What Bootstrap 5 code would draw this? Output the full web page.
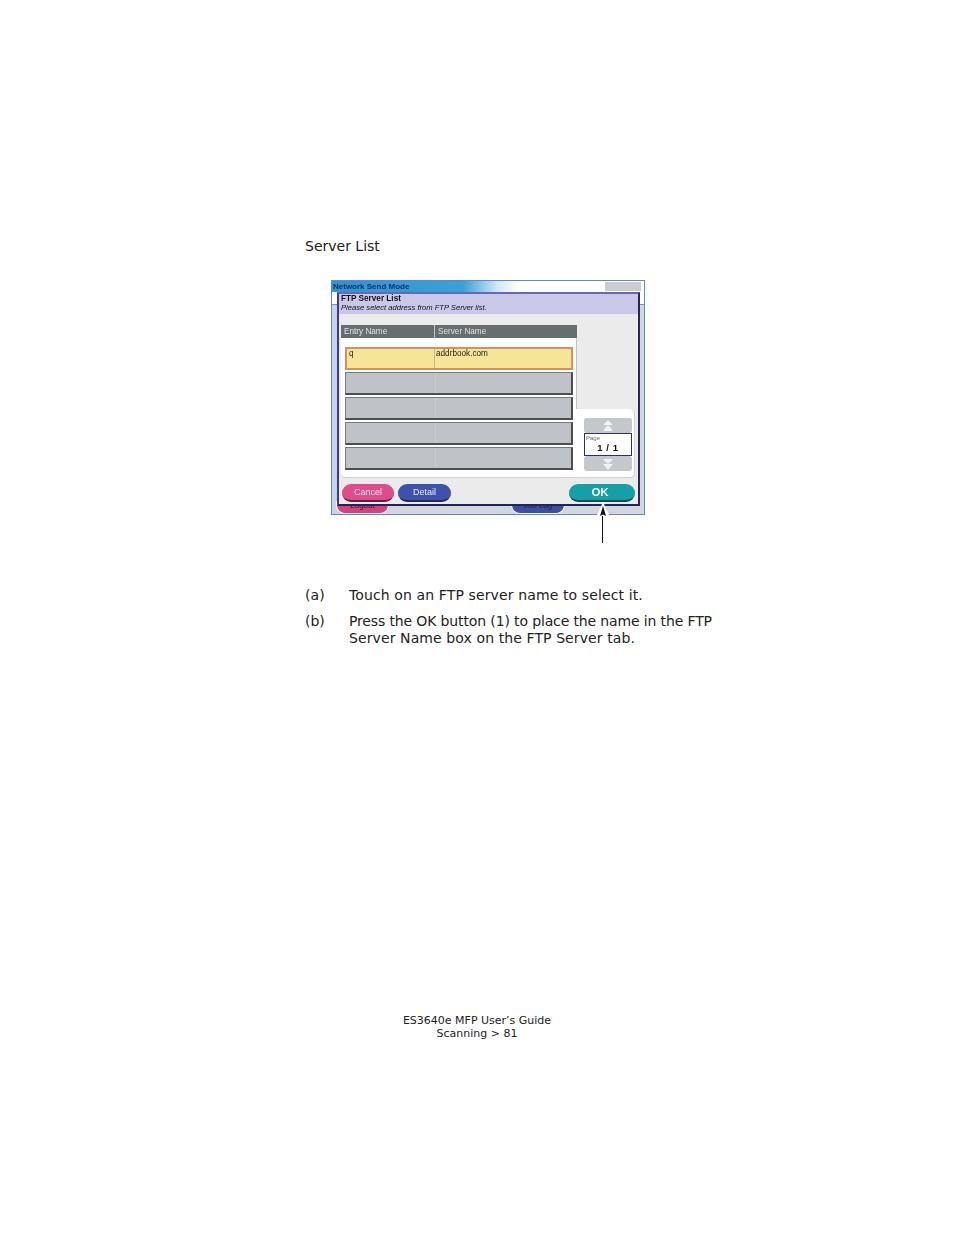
<!DOCTYPE html>
<html lang="en">
<head>
<meta charset="utf-8">
<title>ES3640e MFP User's Guide</title>
<link href="https://cdn.jsdelivr.net/npm/bootstrap@5.3.0/dist/css/bootstrap.min.css" rel="stylesheet">
<style>
html,body{background:#fff;}
.pg{width:954px;height:1235px;overflow:hidden;font-family:"DejaVu Sans",Verdana,sans-serif;color:#222;font-size:14px;line-height:17px;padding-top:238px;}
.bodycol{margin-left:305px;width:420px;}
.shot{position:relative;width:314px;height:235px;margin:25px 0 0 26px;background:linear-gradient(#fff 23px,#8a8d92 23px,#8a8d92 24px,#d2d6de 24px);border:1px solid #5f86d8;font-family:"Liberation Sans",Arial,sans-serif;filter:blur(.4px);overflow:hidden;}
.wtitle{height:11px;background:linear-gradient(90deg,#2f94cf 0,#39a2d4 42%,#cfe8f5 53%,#fff 60%);font-size:8px;font-weight:700;line-height:11px;color:#0f2f6a;padding-left:1px;}
.wstrip{position:absolute;left:0;top:24px;bottom:0;width:5px;background:#c5d3ec;}
.wbtn{position:absolute;right:3px;top:1px;width:36px;height:9px;background:#c9cdd2;}
.under{position:absolute;bottom:0;height:13px;border-radius:0 0 9px 9px;color:#222;font-size:8px;text-align:center;line-height:10px;border:1px solid #fff;border-top:0;}
.u1{left:4px;width:53px;background:#d8407e;}
.u2{left:179px;width:54px;background:#3a4fa6;}
.dlg{position:absolute;left:5px;top:11px;width:303px;height:214px;background:#ebebeb;border:2px solid #3c3a8c;border-top-color:#6a66b4;border-right-color:#2a2a48;border-bottom-color:#24245a;}
.dhead{height:20px;background:#c9c8e8;padding:0 0 0 2px;color:#111;}
.dh1{font-size:8.2px;font-weight:700;line-height:9px;}
.dh2{font-size:7.6px;font-style:italic;line-height:10px;}
.dmain{margin:11px 0 0 2px;width:294px;}
.ttop{display:flex;width:236px;background:#fff;}
.tleft{width:236px;height:84px;border-right:1px solid #c4c4c4;}
.thd{display:flex;height:13px;background:#666e70;color:#dfe3e3;font-size:8.2px;line-height:13px;margin-right:-1px;}
.thd div:first-child{width:94px;padding-left:3px;border-right:1px solid #c5cacb;}
.thd div:last-child{padding-left:3px;}
.tlow{height:69px;width:294px;background:#fff;border-radius:0 5px 5px 5px;border:solid #cfcfcf;border-width:0 1px 1px 0;position:relative;}
.tbwrap{position:relative;}
.rows{position:absolute;left:4px;top:22px;width:228px;display:flex;flex-direction:column;gap:2px;}
.trow{display:flex;height:23px;background:#bfc2c7;border:1px solid #555;border-width:1px 2px 2px 1px;border-color:#77797c #4c4e50 #4c4e50 #77797c;}
.trow div:first-child{width:90px;border-right:1px solid #c8cbcf;}
.trow.sel{background:#f6e596;border:2px solid #d98e60;font-size:8.2px;line-height:9px;color:#222;}
.trow.sel div:first-child{width:88px;padding-left:2px;border-right-color:#cdb87a;}
.trow.sel div:last-child{padding-left:1px;}
.pager{position:absolute;left:243px;top:9px;width:48px;height:53px;}
.pgbtn{height:15px;background:#c4c8cc;border-radius:3px;display:flex;align-items:center;justify-content:center;}
.pgbox{height:23px;background:#fff;border:1px solid #2d2a78;position:relative;color:#111;}
.pglabel{font-size:6px;line-height:7px;color:#666;padding:1px 0 0 1px;}
.pgval{font-size:9.5px;font-weight:700;text-align:center;line-height:11px;letter-spacing:.6px;}
.foot{display:flex;justify-content:space-between;align-items:center;margin:6px 3px 0 3px;}
.pill{height:18px;border-radius:9px;color:#e8ecf6;font-size:9px;line-height:16px;text-align:center;border-bottom:2px solid #222b55;}
.p1{width:52px;background:#e14b8a;margin-right:4px;border-bottom-color:#5a2440;}
.p2{width:53px;background:#3d52ad;}
.p3{width:66px;background:#14a0a6;color:#fff;font-weight:700;font-size:11.5px;border-bottom-color:#10484c;padding-right:4px;}
.ptrline{margin-left:297px;width:1px;height:28px;background:#111;}
.ptrgap{height:44px;}
.ptrhead{position:absolute;left:591px;top:502px;}
.al{display:flex;}
.al>span:first-child{width:44px;flex:none;}
.al-first{margin-bottom:9px;}
.sp-a{letter-spacing:.12px;}
.sp-b1{letter-spacing:-.135px;display:block;white-space:nowrap;}
.sp-b2{letter-spacing:.1px;display:block;white-space:nowrap;}
.foottxt{position:absolute;left:0;top:1014px;width:954px;text-align:center;font-size:11px;line-height:13px;color:#222;}
</style>
</head>
<body>
<div class="pg position-relative">
  <div class="bodycol">
    <p class="m-0">Server List</p>
    <div class="shot">
      <div class="wtitle">Network Send Mode</div>
      <div class="wstrip"></div>
      <div class="wbtn"></div>
      <div class="under u1">Logout</div>
      <div class="under u2">Job Log</div>
      <div class="dlg">
        <div class="dhead">
          <div class="dh1">FTP Server List</div>
          <div class="dh2">Please select address from FTP Server list.</div>
        </div>
        <div class="dmain tbwrap">
          <div class="ttop"><div class="tleft">
            <div class="thd"><div>Entry Name</div><div>Server Name</div></div>
          </div></div>
          <div class="tlow">
            <div class="pager">
              <div class="pgbtn"><svg width="12" height="12" viewBox="0 0 12 12"><path d="M6 0 11 5H1Z M6 5 11 11H1Z" fill="#f1f2f3"/></svg></div>
              <div class="pgbox"><div class="pglabel">Page</div><div class="pgval">1 / 1</div></div>
              <div class="pgbtn"><svg width="12" height="12" viewBox="0 0 12 12"><path d="M1 1H11L6 6Z M1 6H11L6 12Z" fill="#f1f2f3"/></svg></div>
            </div>
          </div>
          <div class="rows">
            <div class="trow sel"><div>q</div><div>addrbook.com</div></div>
            <div class="trow"><div></div><div></div></div>
            <div class="trow"><div></div><div></div></div>
            <div class="trow"><div></div><div></div></div>
            <div class="trow"><div></div><div></div></div>
          </div>
        </div>
        <div class="foot">
          <div class="d-flex"><div class="pill p1">Cancel</div><div class="pill p2">Detail</div></div>
          <div class="pill p3">OK</div>
        </div>
      </div>
    </div>
    <div class="ptrline"></div>
    <div class="ptrgap"></div>
    <div class="al al-first sp-a"><span>(a)</span><span>Touch on an FTP server name to select it.</span></div>
    <div class="al"><span>(b)</span><span><span class="sp-b1">Press the OK button (1) to place the name in the FTP</span><span class="sp-b2">Server Name box on the FTP Server tab.</span></span></div>
  </div>
  <svg class="ptrhead" width="24" height="16" viewBox="0 0 24 16"><path d="M12 0 18.5 14H5.5Z" fill="#fff"/><path d="M12 4 15 14 12 12.5 9 14Z" fill="#111"/></svg>
  <div class="foottxt">ES3640e MFP User’s Guide<br>Scanning &gt; 81</div>
</div>
<script src="https://cdn.jsdelivr.net/npm/bootstrap@5.3.0/dist/js/bootstrap.bundle.min.js"></script>
</body>
</html>
